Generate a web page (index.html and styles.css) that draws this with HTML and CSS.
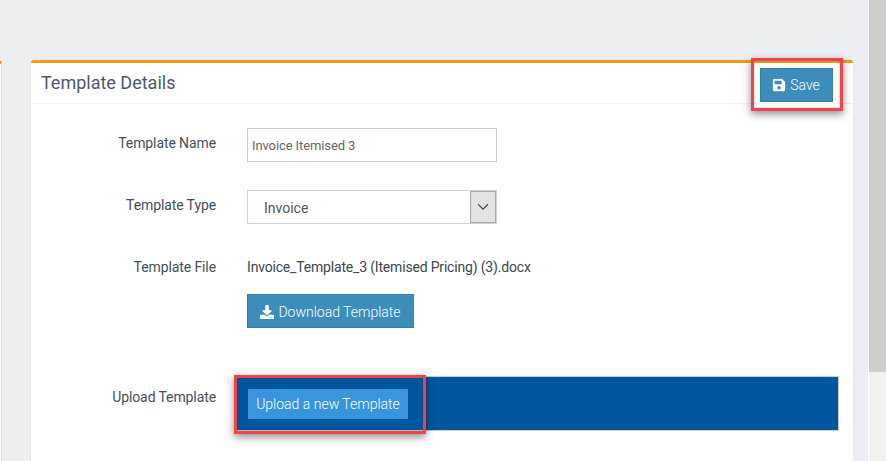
FILE: index.html
```html
<!DOCTYPE html>
<html lang="en">
<head>
<meta charset="utf-8">
<title>Template Details</title>
<link rel="stylesheet" href="styles.css">
</head>
<body>
<div class="page">
  <div class="content">
    <div class="side-panel"></div>
    <section class="card">
      <header class="card-head">
        <h2 class="card-title">Template Details</h2>
        <button class="btn btn-save" type="button">
          <svg class="icon" viewBox="0 0 448 512"><path fill="currentColor" d="M433.941 129.941l-83.882-83.882A48 48 0 0 0 316.118 32H48C21.49 32 0 53.49 0 80v352c0 26.51 21.49 48 48 48h352c26.51 0 48-21.49 48-48V163.882a48 48 0 0 0-14.059-33.941zM224 416c-35.346 0-64-28.654-64-64 0-35.346 28.654-64 64-64s64 28.654 64 64c0 35.346-28.654 64-64 64zm96-304.520V212c0 6.627-5.373 12-12 12H76c-6.627 0-12-5.373-12-12V108c0-6.627 5.373-12 12-12h228.520c3.183 0 6.235 1.264 8.485 3.515l3.480 3.480A11.996 11.996 0 0 1 320 111.480z"/></svg>
          Save
        </button>
      </header>
      <form class="form">
        <label class="label label-name">Template Name</label>
        <div class="field"><input class="input" type="text" value="Invoice Itemised 3"></div>

        <label class="label label-type">Template Type</label>
        <div class="field">
          <div class="select">
            <span class="select-value">Invoice</span>
            <span class="select-arrow">
              <svg viewBox="0 0 12 8" width="12" height="8"><path d="M1 1.200 L6 6.200 L11 1.200" fill="none" stroke="#444" stroke-width="1.200"/></svg>
            </span>
          </div>
        </div>

        <label class="label label-file">Template File</label>
        <div class="field field-file">
          <p class="file-name">Invoice_Template_3 (Itemised Pricing) (3).docx</p>
          <button class="btn btn-download" type="button">
            <svg class="icon" viewBox="0 0 512 512"><path fill="currentColor" d="M216 0h80c13.300 0 24 10.700 24 24v168h87.700c17.800 0 26.700 21.500 14.100 34.100L269.700 378.300c-7.500 7.500-19.800 7.500-27.300 0L90.100 226.100c-12.600-12.600-3.700-34.100 14.100-34.100H192V24c0-13.300 10.700-24 24-24zm296 376v112c0 13.300-10.700 24-24 24H24c-13.300 0-24-10.700-24-24V376c0-13.300 10.700-24 24-24h146.700l49 49c20.100 20.100 52.500 20.100 72.600 0l49-49H488c13.300 0 24 10.700 24 24zm-124 88c0-11-9-20-20-20s-20 9-20 20 9 20 20 20 20-9 20-20zm64 0c0-11-9-20-20-20s-20 9-20 20 9 20 20 20 20-9 20-20z"/></svg>
            Download Template
          </button>
        </div>

        <label class="label label-upload">Upload Template</label>
        <div class="field">
          <div class="upload-band">
            <button class="btn-upload" type="button">Upload a new Template</button>
          </div>
        </div>
      </form>
    </section>
  </div>
  <div class="scrollbar"><div class="scroll-thumb"></div></div>
</div>
<div class="callout callout-save"></div>
<div class="callout callout-upload"></div>
</body>
</html>
```
FILE: styles.css
```css
* { box-sizing: border-box; }
html, body { margin: 0; height: 461px; overflow: hidden; }
body { font-family: Roboto, "Liberation Sans", sans-serif; color: #3d4750; background: #ebeef3; position: relative; }

.page { display: flex; height: 461px; }
.content { flex: 0 0 868px; display: flex; align-items: flex-start; padding-top: 60px; }

.side-panel { flex: 0 0 2px; height: 401px; margin-top: 1px; background: #fff; border-top: 3px solid #f39c12; border-right: 1px solid #e0e4ea; }

.card { flex: 0 0 822px; margin-left: 29px; height: 401px; background: #fff; border-top: 3px solid #f39c12; border-radius: 3px 3px 0 0; box-shadow: 0 0 0 1px #e4e8ee; }
.card-head { height: 41px; border-bottom: 1px solid #f0f1f3; display: flex; align-items: flex-start; justify-content: space-between; padding: 5px 20px 0 10px; }
.card-title { margin: 0; font-size: 18px; line-height: 30px; font-weight: 400; color: #4a5a6c; }

.btn { display: inline-flex; align-items: center; justify-content: center; gap: 4px; height: 34px; background: #3c8dbc; border: 1px solid #367fa9; color: #fff; font: 300 14px Roboto, "Liberation Sans", sans-serif; padding: 0; }
.btn-save { width: 73px; padding-right: 1px; }
.btn-download { width: 167px; margin-top: 17px; padding-top: 1px; }
.icon { width: 14px; height: 14px; display: block; }

.form { display: grid; grid-template-columns: 185px 1fr; column-gap: 31px; padding: 24px 14px 0 0; }
.label { text-align: right; font-size: 14px; color: #44505c; letter-spacing: -0.1px; }
.label-name { padding-top: 7px; margin-bottom: 28px; }
.label-type { padding-top: 7px; margin-bottom: 28px; }
.label-file { padding-top: 2px; }
.label-upload { padding-top: 13px; margin-top: 48px; }

.field { min-width: 0; }
.input { display: block; width: 250px; height: 34px; border: 1px solid #ccc; padding: 0 4px; font: 400 13px Roboto, "Liberation Sans", sans-serif; letter-spacing: -0.1px; color: #666; margin-bottom: 28px; background: #fff; border-radius: 0; outline: 0; }

.select { width: 250px; height: 34px; border: 1px solid #d2d2de; display: flex; align-items: stretch; justify-content: space-between; margin-bottom: 33px; background: #fff; }
.select-value { font-size: 14px; color: #555; padding: 9px 0 0 16px; }
.select-arrow { width: 26px; background: #e3e3e3; border: 1px solid #a9a9a9; display: flex; align-items: center; justify-content: center; }

.file-name { margin: 0; font-size: 14px; line-height: 20px; color: #3d4750; white-space: nowrap; letter-spacing: -0.18px; }
.field-file { display: flex; flex-direction: column; align-items: flex-start; }

.upload-band { margin: 48px 0 0 -11px; height: 55px; background: #00579d; border: 1px solid #c9ccd0; border-left: 0; padding: 12px 12px; width: 603px; }
.btn-upload { display: block; width: 160px; height: 30px; background: #3895dc; border: 0; color: #fff; font: 300 14px Roboto, "Liberation Sans", sans-serif; padding: 0; }

.scrollbar { flex: 0 0 18px; background: #f1f1f1; border-left: 1px solid #fff; }
.scroll-thumb { height: 372px; background: #cdcdcd; }

.callout { position: absolute; border: 3px solid #f5424a; box-shadow: 0 3px 8px rgba(0, 0, 0, 0.45), inset 0 0 3px rgba(0, 0, 0, 0.2); }
.callout-save { left: 751px; top: 58px; width: 92px; height: 53px; }
.callout-upload { left: 234px; top: 375px; width: 192px; height: 59px; }
```
